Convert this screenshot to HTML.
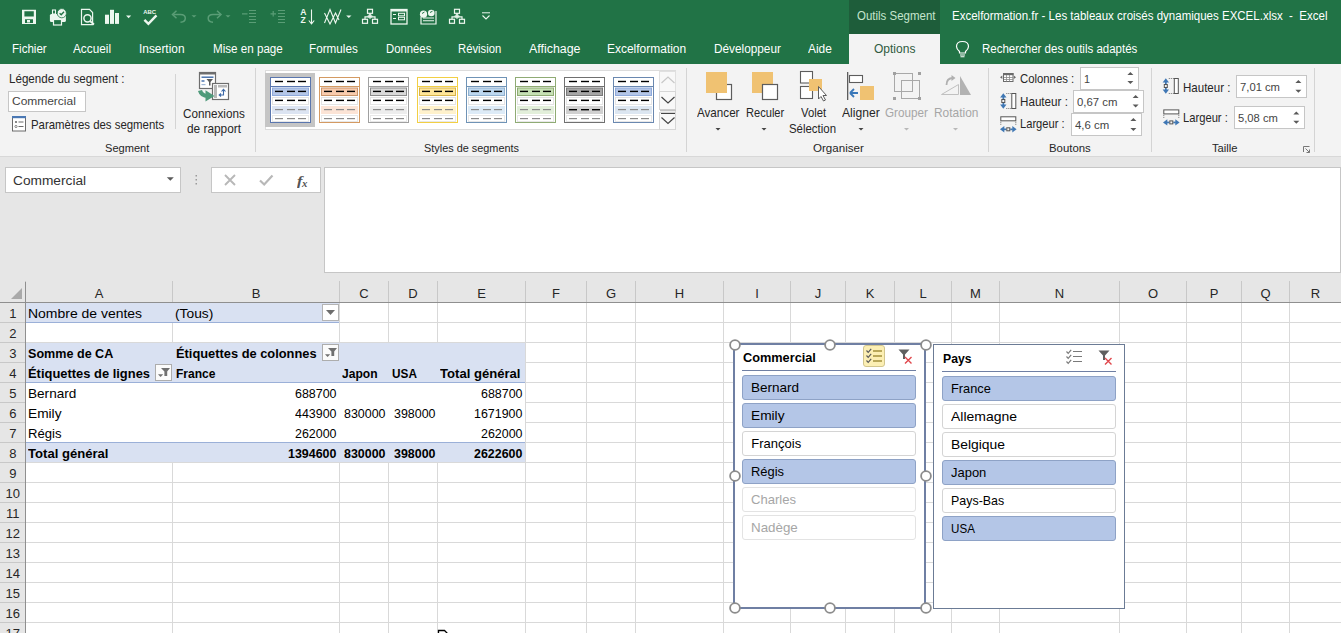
<!DOCTYPE html>
<html><head><meta charset="utf-8">
<style>
*{box-sizing:border-box}
html,body{margin:0;padding:0}
body{width:1341px;height:633px;overflow:hidden;position:relative;background:#fff;font-family:"Liberation Sans",sans-serif;color:#000}
.a{position:absolute}
.t{position:absolute;white-space:pre;transform-origin:0 0}
svg{position:absolute;overflow:visible}
</style></head><body>
<div class="a" style="left:0px;top:0px;width:1341px;height:64px;background:#217346;"></div>
<div class="a" style="left:849px;top:0px;width:91px;height:34px;background:#1e5d3a;"></div>
<div class="a" style="left:849px;top:34px;width:91px;height:30px;background:#f3f3f3;"></div>
<div class="t" style="left:856.50px;top:9.80px;font-size:12px;line-height:12px;color:#c5e5cd;transform:scaleX(0.9568);">Outils Segment</div>
<div class="t" style="left:952.00px;top:9.80px;font-size:12px;line-height:12px;color:#ffffff;transform:scaleX(0.9591);">Excelformation.fr - Les tableaux croisés dynamiques EXCEL.xlsx  -  Excel</div>
<div class="t" style="left:12.30px;top:42.58px;font-size:12.5px;line-height:12.5px;color:#ffffff;transform:scaleX(0.9249);">Fichier</div>
<div class="t" style="left:73.40px;top:42.58px;font-size:12.5px;line-height:12.5px;color:#ffffff;transform:scaleX(0.9430);">Accueil</div>
<div class="t" style="left:139.10px;top:42.58px;font-size:12.5px;line-height:12.5px;color:#ffffff;transform:scaleX(0.9488);">Insertion</div>
<div class="t" style="left:212.50px;top:42.58px;font-size:12.5px;line-height:12.5px;color:#ffffff;transform:scaleX(0.9299);">Mise en page</div>
<div class="t" style="left:309.00px;top:42.58px;font-size:12.5px;line-height:12.5px;color:#ffffff;transform:scaleX(0.9368);">Formules</div>
<div class="t" style="left:385.70px;top:42.58px;font-size:12.5px;line-height:12.5px;color:#ffffff;transform:scaleX(0.9052);">Données</div>
<div class="t" style="left:458.20px;top:42.58px;font-size:12.5px;line-height:12.5px;color:#ffffff;transform:scaleX(0.9012);">Révision</div>
<div class="t" style="left:528.90px;top:42.58px;font-size:12.5px;line-height:12.5px;color:#ffffff;transform:scaleX(0.9922);">Affichage</div>
<div class="t" style="left:607.40px;top:42.58px;font-size:12.5px;line-height:12.5px;color:#ffffff;transform:scaleX(0.9578);">Excelformation</div>
<div class="t" style="left:714.40px;top:42.58px;font-size:12.5px;line-height:12.5px;color:#ffffff;transform:scaleX(0.9437);">Développeur</div>
<div class="t" style="left:808.10px;top:42.58px;font-size:12.5px;line-height:12.5px;color:#ffffff;transform:scaleX(0.9548);">Aide</div>
<div class="t" style="left:873.60px;top:43.38px;font-size:12.5px;line-height:12.5px;color:#2f5b40;transform:scaleX(0.9607);">Options</div>
<div class="t" style="left:982.20px;top:42.67px;font-size:12.5px;line-height:12.5px;color:#ffffff;transform:scaleX(0.9197);">Rechercher des outils adaptés</div>
<div class="a" style="left:0px;top:64px;width:1341px;height:93px;background:#f3f3f3;"></div>
<div class="a" style="left:0px;top:156px;width:1341px;height:1px;background:#d8d8d8;"></div>
<div class="a" style="left:0px;top:157px;width:1341px;height:126px;background:#e6e6e6;"></div>
<div class="a" style="left:175px;top:74px;width:1px;height:55px;background:#d4d4d4;"></div>
<div class="a" style="left:255px;top:68px;width:1px;height:84px;background:#d4d4d4;"></div>
<div class="a" style="left:686px;top:68px;width:1px;height:84px;background:#d4d4d4;"></div>
<div class="a" style="left:988px;top:68px;width:1px;height:84px;background:#d4d4d4;"></div>
<div class="a" style="left:1151px;top:68px;width:1px;height:84px;background:#d4d4d4;"></div>
<div class="a" style="left:1314px;top:68px;width:1px;height:84px;background:#d4d4d4;"></div>
<div class="t" style="left:105.40px;top:143.08px;font-size:11.2px;line-height:11.2px;color:#262626;transform:scaleX(0.9893);">Segment</div>
<div class="t" style="left:812.50px;top:143.08px;font-size:11.2px;line-height:11.2px;color:#262626;transform:scaleX(1.0341);">Organiser</div>
<div class="t" style="left:1048.60px;top:142.68px;font-size:11.2px;line-height:11.2px;color:#262626;transform:scaleX(1.0180);">Boutons</div>
<div class="t" style="left:1212.00px;top:142.68px;font-size:11.2px;line-height:11.2px;color:#262626;transform:scaleX(1.0039);">Taille</div>
<div class="t" style="left:8.70px;top:73.23px;font-size:12.2px;line-height:12.2px;color:#262626;transform:scaleX(0.9522);">Légende du segment :</div>
<div class="a" style="left:8px;top:91px;width:78px;height:21px;background:#ffffff;border:1px solid #c6c6c6;"></div>
<div class="t" style="left:11.80px;top:95.82px;font-size:11.5px;line-height:11.5px;color:#444444;transform:scaleX(1.0400);">Commercial</div>
<div class="t" style="left:30.60px;top:118.93px;font-size:12.2px;line-height:12.2px;color:#262626;transform:scaleX(0.9363);">Paramètres des segments</div>
<div class="t" style="left:182.80px;top:107.83px;font-size:12.2px;line-height:12.2px;color:#262626;transform:scaleX(0.9600);">Connexions</div>
<div class="t" style="left:186.70px;top:122.83px;font-size:12.2px;line-height:12.2px;color:#262626;transform:scaleX(0.9719);">de rapport</div>
<div class="a" style="left:5px;top:167px;width:176px;height:26px;background:#ffffff;border:1px solid #c6c6c6;"></div>
<div class="t" style="left:12.50px;top:174.57px;font-size:12.5px;line-height:12.5px;color:#333333;transform:scaleX(1.0962);">Commercial</div>
<div class="a" style="left:211px;top:167px;width:110px;height:26px;background:#ffffff;border:1px solid #c6c6c6;"></div>
<div class="a" style="left:324px;top:167px;width:1017px;height:106px;background:#ffffff;border:1px solid #c6c6c6;"></div>
<div class="a" style="left:0px;top:283px;width:1341px;height:20px;background:#e6e6e6;"></div>
<div class="a" style="left:0px;top:302px;width:1341px;height:1px;background:#8f8f8f;"></div>
<div class="a" style="left:25px;top:281px;width:1px;height:21px;background:#c8c8c8;"></div>
<div class="a" style="left:172px;top:281px;width:1px;height:21px;background:#c8c8c8;"></div>
<div class="a" style="left:339px;top:281px;width:1px;height:21px;background:#c8c8c8;"></div>
<div class="a" style="left:388px;top:281px;width:1px;height:21px;background:#c8c8c8;"></div>
<div class="a" style="left:437px;top:281px;width:1px;height:21px;background:#c8c8c8;"></div>
<div class="a" style="left:525px;top:281px;width:1px;height:21px;background:#c8c8c8;"></div>
<div class="a" style="left:586px;top:281px;width:1px;height:21px;background:#c8c8c8;"></div>
<div class="a" style="left:635px;top:281px;width:1px;height:21px;background:#c8c8c8;"></div>
<div class="a" style="left:723px;top:281px;width:1px;height:21px;background:#c8c8c8;"></div>
<div class="a" style="left:790px;top:281px;width:1px;height:21px;background:#c8c8c8;"></div>
<div class="a" style="left:845px;top:281px;width:1px;height:21px;background:#c8c8c8;"></div>
<div class="a" style="left:894px;top:281px;width:1px;height:21px;background:#c8c8c8;"></div>
<div class="a" style="left:951px;top:281px;width:1px;height:21px;background:#c8c8c8;"></div>
<div class="a" style="left:999px;top:281px;width:1px;height:21px;background:#c8c8c8;"></div>
<div class="a" style="left:1119px;top:281px;width:1px;height:21px;background:#c8c8c8;"></div>
<div class="a" style="left:1186px;top:281px;width:1px;height:21px;background:#c8c8c8;"></div>
<div class="a" style="left:1241px;top:281px;width:1px;height:21px;background:#c8c8c8;"></div>
<div class="a" style="left:1289px;top:281px;width:1px;height:21px;background:#c8c8c8;"></div>
<div class="t" style="left:94.66px;top:286.95px;font-size:13px;line-height:13px;color:#262626;">A</div>
<div class="t" style="left:251.66px;top:286.95px;font-size:13px;line-height:13px;color:#262626;">B</div>
<div class="t" style="left:359.30px;top:286.95px;font-size:13px;line-height:13px;color:#262626;">C</div>
<div class="t" style="left:408.30px;top:286.95px;font-size:13px;line-height:13px;color:#262626;">D</div>
<div class="t" style="left:477.16px;top:286.95px;font-size:13px;line-height:13px;color:#262626;">E</div>
<div class="t" style="left:552.02px;top:286.95px;font-size:13px;line-height:13px;color:#262626;">F</div>
<div class="t" style="left:605.94px;top:286.95px;font-size:13px;line-height:13px;color:#262626;">G</div>
<div class="t" style="left:674.80px;top:286.95px;font-size:13px;line-height:13px;color:#262626;">H</div>
<div class="t" style="left:755.19px;top:286.95px;font-size:13px;line-height:13px;color:#262626;">I</div>
<div class="t" style="left:814.75px;top:286.95px;font-size:13px;line-height:13px;color:#262626;">J</div>
<div class="t" style="left:865.66px;top:286.95px;font-size:13px;line-height:13px;color:#262626;">K</div>
<div class="t" style="left:919.38px;top:286.95px;font-size:13px;line-height:13px;color:#262626;">L</div>
<div class="t" style="left:970.08px;top:286.95px;font-size:13px;line-height:13px;color:#262626;">M</div>
<div class="t" style="left:1054.80px;top:286.95px;font-size:13px;line-height:13px;color:#262626;">N</div>
<div class="t" style="left:1147.94px;top:286.95px;font-size:13px;line-height:13px;color:#262626;">O</div>
<div class="t" style="left:1209.66px;top:286.95px;font-size:13px;line-height:13px;color:#262626;">P</div>
<div class="t" style="left:1260.44px;top:286.95px;font-size:13px;line-height:13px;color:#262626;">Q</div>
<div class="t" style="left:1310.80px;top:286.95px;font-size:13px;line-height:13px;color:#262626;">R</div>
<div class="a" style="left:0px;top:303px;width:25px;height:330px;background:#e6e6e6;"></div>
<div class="a" style="left:25px;top:282px;width:1px;height:351px;background:#8f8f8f;"></div>
<div class="a" style="left:0px;top:322px;width:25px;height:1px;background:#c8c8c8;"></div>
<div class="t" style="left:9.18px;top:306.95px;font-size:13px;line-height:13px;color:#262626;">1</div>
<div class="a" style="left:0px;top:342px;width:25px;height:1px;background:#c8c8c8;"></div>
<div class="t" style="left:9.18px;top:326.95px;font-size:13px;line-height:13px;color:#262626;">2</div>
<div class="a" style="left:0px;top:362px;width:25px;height:1px;background:#c8c8c8;"></div>
<div class="t" style="left:9.18px;top:346.95px;font-size:13px;line-height:13px;color:#262626;">3</div>
<div class="a" style="left:0px;top:382px;width:25px;height:1px;background:#c8c8c8;"></div>
<div class="t" style="left:9.18px;top:366.95px;font-size:13px;line-height:13px;color:#262626;">4</div>
<div class="a" style="left:0px;top:402px;width:25px;height:1px;background:#c8c8c8;"></div>
<div class="t" style="left:9.18px;top:386.95px;font-size:13px;line-height:13px;color:#262626;">5</div>
<div class="a" style="left:0px;top:422px;width:25px;height:1px;background:#c8c8c8;"></div>
<div class="t" style="left:9.18px;top:406.95px;font-size:13px;line-height:13px;color:#262626;">6</div>
<div class="a" style="left:0px;top:442px;width:25px;height:1px;background:#c8c8c8;"></div>
<div class="t" style="left:9.18px;top:426.95px;font-size:13px;line-height:13px;color:#262626;">7</div>
<div class="a" style="left:0px;top:462px;width:25px;height:1px;background:#c8c8c8;"></div>
<div class="t" style="left:9.18px;top:446.95px;font-size:13px;line-height:13px;color:#262626;">8</div>
<div class="a" style="left:0px;top:482px;width:25px;height:1px;background:#c8c8c8;"></div>
<div class="t" style="left:9.18px;top:466.95px;font-size:13px;line-height:13px;color:#262626;">9</div>
<div class="a" style="left:0px;top:502px;width:25px;height:1px;background:#c8c8c8;"></div>
<div class="t" style="left:5.57px;top:486.95px;font-size:13px;line-height:13px;color:#262626;">10</div>
<div class="a" style="left:0px;top:522px;width:25px;height:1px;background:#c8c8c8;"></div>
<div class="t" style="left:6.05px;top:506.95px;font-size:13px;line-height:13px;color:#262626;">11</div>
<div class="a" style="left:0px;top:542px;width:25px;height:1px;background:#c8c8c8;"></div>
<div class="t" style="left:5.57px;top:526.95px;font-size:13px;line-height:13px;color:#262626;">12</div>
<div class="a" style="left:0px;top:562px;width:25px;height:1px;background:#c8c8c8;"></div>
<div class="t" style="left:5.57px;top:546.95px;font-size:13px;line-height:13px;color:#262626;">13</div>
<div class="a" style="left:0px;top:582px;width:25px;height:1px;background:#c8c8c8;"></div>
<div class="t" style="left:5.57px;top:566.95px;font-size:13px;line-height:13px;color:#262626;">14</div>
<div class="a" style="left:0px;top:602px;width:25px;height:1px;background:#c8c8c8;"></div>
<div class="t" style="left:5.57px;top:586.95px;font-size:13px;line-height:13px;color:#262626;">15</div>
<div class="a" style="left:0px;top:622px;width:25px;height:1px;background:#c8c8c8;"></div>
<div class="t" style="left:5.57px;top:606.95px;font-size:13px;line-height:13px;color:#262626;">16</div>
<div class="a" style="left:0px;top:642px;width:25px;height:1px;background:#c8c8c8;"></div>
<div class="t" style="left:5.57px;top:626.95px;font-size:13px;line-height:13px;color:#262626;">17</div>
<div class="a" style="left:26px;top:322px;width:1315px;height:1px;background:#d9d9d9;"></div>
<div class="a" style="left:26px;top:342px;width:1315px;height:1px;background:#d9d9d9;"></div>
<div class="a" style="left:26px;top:362px;width:1315px;height:1px;background:#d9d9d9;"></div>
<div class="a" style="left:26px;top:382px;width:1315px;height:1px;background:#d9d9d9;"></div>
<div class="a" style="left:26px;top:402px;width:1315px;height:1px;background:#d9d9d9;"></div>
<div class="a" style="left:26px;top:422px;width:1315px;height:1px;background:#d9d9d9;"></div>
<div class="a" style="left:26px;top:442px;width:1315px;height:1px;background:#d9d9d9;"></div>
<div class="a" style="left:26px;top:462px;width:1315px;height:1px;background:#d9d9d9;"></div>
<div class="a" style="left:26px;top:482px;width:1315px;height:1px;background:#d9d9d9;"></div>
<div class="a" style="left:26px;top:502px;width:1315px;height:1px;background:#d9d9d9;"></div>
<div class="a" style="left:26px;top:522px;width:1315px;height:1px;background:#d9d9d9;"></div>
<div class="a" style="left:26px;top:542px;width:1315px;height:1px;background:#d9d9d9;"></div>
<div class="a" style="left:26px;top:562px;width:1315px;height:1px;background:#d9d9d9;"></div>
<div class="a" style="left:26px;top:582px;width:1315px;height:1px;background:#d9d9d9;"></div>
<div class="a" style="left:26px;top:602px;width:1315px;height:1px;background:#d9d9d9;"></div>
<div class="a" style="left:26px;top:622px;width:1315px;height:1px;background:#d9d9d9;"></div>
<div class="a" style="left:172px;top:303px;width:1px;height:330px;background:#d9d9d9;"></div>
<div class="a" style="left:339px;top:303px;width:1px;height:330px;background:#d9d9d9;"></div>
<div class="a" style="left:388px;top:303px;width:1px;height:330px;background:#d9d9d9;"></div>
<div class="a" style="left:437px;top:303px;width:1px;height:330px;background:#d9d9d9;"></div>
<div class="a" style="left:525px;top:303px;width:1px;height:330px;background:#d9d9d9;"></div>
<div class="a" style="left:586px;top:303px;width:1px;height:330px;background:#d9d9d9;"></div>
<div class="a" style="left:635px;top:303px;width:1px;height:330px;background:#d9d9d9;"></div>
<div class="a" style="left:723px;top:303px;width:1px;height:330px;background:#d9d9d9;"></div>
<div class="a" style="left:790px;top:303px;width:1px;height:330px;background:#d9d9d9;"></div>
<div class="a" style="left:845px;top:303px;width:1px;height:330px;background:#d9d9d9;"></div>
<div class="a" style="left:894px;top:303px;width:1px;height:330px;background:#d9d9d9;"></div>
<div class="a" style="left:951px;top:303px;width:1px;height:330px;background:#d9d9d9;"></div>
<div class="a" style="left:999px;top:303px;width:1px;height:330px;background:#d9d9d9;"></div>
<div class="a" style="left:1119px;top:303px;width:1px;height:330px;background:#d9d9d9;"></div>
<div class="a" style="left:1186px;top:303px;width:1px;height:330px;background:#d9d9d9;"></div>
<div class="a" style="left:1241px;top:303px;width:1px;height:330px;background:#d9d9d9;"></div>
<div class="a" style="left:1289px;top:303px;width:1px;height:330px;background:#d9d9d9;"></div>
<div class="a" style="left:26px;top:303px;width:313px;height:19px;background:#d9e1f2;"></div>
<div class="a" style="left:26px;top:322px;width:313px;height:1px;background:#9bb0d8;"></div>
<div class="a" style="left:26px;top:343px;width:499px;height:39px;background:#d9e1f2;"></div>
<div class="a" style="left:26px;top:382px;width:499px;height:1px;background:#9bb0d8;"></div>
<div class="a" style="left:26px;top:383px;width:499px;height:59px;background:#ffffff;"></div>
<div class="a" style="left:26px;top:442px;width:499px;height:1px;background:#9bb0d8;"></div>
<div class="a" style="left:26px;top:443px;width:499px;height:19px;background:#d9e1f2;"></div>
<div class="a" style="left:322px;top:304px;width:17px;height:17px;background:#ffffff;border:1px solid #b4b4b4;"></div>
<svg style="left:326px;top:310px" width="9" height="5"><path d="M0,0 L9,0 L4.5,5 Z" fill="#6d6d6d"/></svg>
<div class="a" style="left:155px;top:364px;width:17px;height:17px;background:#fbfbfb;border:1px solid #adadad"></div>
<svg style="left:155px;top:364px" width="17" height="17"><path d="M6,4 L15,4 L12.2,7.5 L12.2,12 L9.4,12 L9.4,7.5 Z" fill="#707070"/><path d="M3,10.3 L8.2,10.3 L5.6,13 Z" fill="#707070"/></svg>
<div class="a" style="left:322px;top:344px;width:17px;height:17px;background:#fbfbfb;border:1px solid #adadad"></div>
<svg style="left:322px;top:344px" width="17" height="17"><path d="M6,4 L15,4 L12.2,7.5 L12.2,12 L9.4,12 L9.4,7.5 Z" fill="#707070"/><path d="M3,10.3 L8.2,10.3 L5.6,13 Z" fill="#707070"/></svg>
<div class="t" style="left:27.80px;top:306.52px;font-size:13.5px;line-height:13.5px;color:#000000;transform:scaleX(1.0343);">Nombre de ventes</div>
<div class="t" style="left:175.20px;top:306.52px;font-size:13.5px;line-height:13.5px;color:#000000;transform:scaleX(1.0209);">(Tous)</div>
<div class="t" style="left:27.80px;top:346.75px;font-size:13px;line-height:13px;color:#000000;font-weight:700;transform:scaleX(0.9678);">Somme de CA</div>
<div class="t" style="left:175.75px;top:346.85px;font-size:13px;line-height:13px;color:#000000;font-weight:700;transform:scaleX(0.9880);">Étiquettes de colonnes</div>
<div class="t" style="left:27.80px;top:366.55px;font-size:13px;line-height:13px;color:#000000;font-weight:700;transform:scaleX(0.9934);">Étiquettes de lignes</div>
<div class="t" style="left:175.75px;top:366.95px;font-size:13px;line-height:13px;color:#000000;font-weight:700;transform:scaleX(0.9263);">France</div>
<div class="t" style="left:342.30px;top:366.95px;font-size:13px;line-height:13px;color:#000000;font-weight:700;transform:scaleX(0.9270);">Japon</div>
<div class="t" style="left:391.90px;top:366.95px;font-size:13px;line-height:13px;color:#000000;font-weight:700;transform:scaleX(0.9070);">USA</div>
<div class="t" style="left:440.20px;top:366.95px;font-size:13px;line-height:13px;color:#000000;font-weight:700;transform:scaleX(1.0068);">Total général</div>
<div class="t" style="left:27.80px;top:386.52px;font-size:13.5px;line-height:13.5px;color:#000000;transform:scaleX(1.0056);">Bernard</div>
<div class="t" style="left:27.80px;top:406.52px;font-size:13.5px;line-height:13.5px;color:#000000;transform:scaleX(1.0152);">Emily</div>
<div class="t" style="left:27.80px;top:426.52px;font-size:13.5px;line-height:13.5px;color:#000000;transform:scaleX(0.9706);">Régis</div>
<div class="t" style="left:27.80px;top:446.95px;font-size:13px;line-height:13px;color:#000000;font-weight:700;transform:scaleX(1.0068);">Total général</div>
<div class="t" style="left:295.10px;top:386.95px;font-size:13px;line-height:13px;color:#000000;transform:scaleX(0.9564);">688700</div>
<div class="t" style="left:481.20px;top:386.95px;font-size:13px;line-height:13px;color:#000000;transform:scaleX(0.9564);">688700</div>
<div class="t" style="left:295.10px;top:406.95px;font-size:13px;line-height:13px;color:#000000;transform:scaleX(0.9564);">443900</div>
<div class="t" style="left:344.30px;top:406.95px;font-size:13px;line-height:13px;color:#000000;transform:scaleX(0.9564);">830000</div>
<div class="t" style="left:393.50px;top:406.95px;font-size:13px;line-height:13px;color:#000000;transform:scaleX(0.9564);">398000</div>
<div class="t" style="left:474.28px;top:406.95px;font-size:13px;line-height:13px;color:#000000;transform:scaleX(0.9564);">1671900</div>
<div class="t" style="left:295.10px;top:426.95px;font-size:13px;line-height:13px;color:#000000;transform:scaleX(0.9564);">262000</div>
<div class="t" style="left:481.20px;top:426.95px;font-size:13px;line-height:13px;color:#000000;transform:scaleX(0.9564);">262000</div>
<div class="t" style="left:288.18px;top:446.95px;font-size:13px;line-height:13px;color:#000000;font-weight:700;transform:scaleX(0.9564);">1394600</div>
<div class="t" style="left:344.30px;top:446.95px;font-size:13px;line-height:13px;color:#000000;font-weight:700;transform:scaleX(0.9564);">830000</div>
<div class="t" style="left:393.50px;top:446.95px;font-size:13px;line-height:13px;color:#000000;font-weight:700;transform:scaleX(0.9564);">398000</div>
<div class="t" style="left:474.28px;top:446.95px;font-size:13px;line-height:13px;color:#000000;font-weight:700;transform:scaleX(0.9564);">2622600</div>
<div class="a" style="left:733px;top:343px;width:193px;height:266px;background:#ffffff;border:2px solid #6f7fa3;"></div>
<div class="t" style="left:742.80px;top:350.65px;font-size:13px;line-height:13px;color:#000;font-weight:700;transform:scaleX(0.9796);">Commercial</div>
<div class="a" style="left:742px;top:370px;width:174px;height:1px;background:#6f7fa3;"></div>
<div class="a" style="left:742px;top:375px;width:174px;height:25px;background:#b4c6e7;border:1px solid #8ea2c6;border-radius:3px"></div>
<div class="t" style="left:751.30px;top:380.95px;font-size:13px;line-height:13px;color:#000000;transform:scaleX(1.0400);">Bernard</div>
<div class="a" style="left:742px;top:403px;width:174px;height:25px;background:#b4c6e7;border:1px solid #8ea2c6;border-radius:3px"></div>
<div class="t" style="left:751.30px;top:408.95px;font-size:13px;line-height:13px;color:#000000;transform:scaleX(1.0541);">Emily</div>
<div class="a" style="left:742px;top:431px;width:174px;height:25px;background:#ffffff;border:1px solid #d4d4d4;border-radius:3px"></div>
<div class="t" style="left:751.30px;top:436.95px;font-size:13px;line-height:13px;color:#000000;">François</div>
<div class="a" style="left:742px;top:459px;width:174px;height:25px;background:#b4c6e7;border:1px solid #8ea2c6;border-radius:3px"></div>
<div class="t" style="left:751.30px;top:464.95px;font-size:13px;line-height:13px;color:#000000;transform:scaleX(0.9925);">Régis</div>
<div class="a" style="left:742px;top:487px;width:174px;height:25px;background:#ffffff;border:1px solid #e3e3e3;border-radius:3px"></div>
<div class="t" style="left:751.30px;top:492.95px;font-size:13px;line-height:13px;color:#a6a6a6;transform:scaleX(1.0045);">Charles</div>
<div class="a" style="left:742px;top:515px;width:174px;height:25px;background:#ffffff;border:1px solid #e3e3e3;border-radius:3px"></div>
<div class="t" style="left:751.30px;top:520.95px;font-size:13px;line-height:13px;color:#a6a6a6;transform:scaleX(1.0275);">Nadège</div>
<div class="a" style="left:933px;top:344px;width:192px;height:265px;background:#ffffff;border:1px solid #6b7b95;"></div>
<div class="t" style="left:942.50px;top:351.85px;font-size:13px;line-height:13px;color:#000;font-weight:700;transform:scaleX(0.9383);">Pays</div>
<div class="a" style="left:942px;top:371px;width:174px;height:1px;background:#6f7fa3;"></div>
<div class="a" style="left:942px;top:376px;width:174px;height:25px;background:#b4c6e7;border:1px solid #8ea2c6;border-radius:3px"></div>
<div class="t" style="left:951.30px;top:381.95px;font-size:13px;line-height:13px;color:#000000;transform:scaleX(0.9835);">France</div>
<div class="a" style="left:942px;top:404px;width:174px;height:25px;background:#ffffff;border:1px solid #d4d4d4;border-radius:3px"></div>
<div class="t" style="left:951.30px;top:409.95px;font-size:13px;line-height:13px;color:#000000;transform:scaleX(1.0743);">Allemagne</div>
<div class="a" style="left:942px;top:432px;width:174px;height:25px;background:#ffffff;border:1px solid #d4d4d4;border-radius:3px"></div>
<div class="t" style="left:951.30px;top:437.95px;font-size:13px;line-height:13px;color:#000000;transform:scaleX(1.0670);">Belgique</div>
<div class="a" style="left:942px;top:460px;width:174px;height:25px;background:#b4c6e7;border:1px solid #8ea2c6;border-radius:3px"></div>
<div class="t" style="left:951.30px;top:465.95px;font-size:13px;line-height:13px;color:#000000;transform:scaleX(0.9966);">Japon</div>
<div class="a" style="left:942px;top:488px;width:174px;height:25px;background:#ffffff;border:1px solid #d4d4d4;border-radius:3px"></div>
<div class="t" style="left:951.30px;top:493.95px;font-size:13px;line-height:13px;color:#000000;transform:scaleX(0.9561);">Pays-Bas</div>
<div class="a" style="left:942px;top:516px;width:174px;height:25px;background:#b4c6e7;border:1px solid #8ea2c6;border-radius:3px"></div>
<div class="t" style="left:951.30px;top:521.95px;font-size:13px;line-height:13px;color:#000000;transform:scaleX(0.8940);">USA</div>
<svg style="left:728.5px;top:338.5px" width="12" height="12"><circle cx="6" cy="6" r="4.9" fill="#ffffff" stroke="#8c8c8c" stroke-width="1.8"/></svg>
<svg style="left:728.5px;top:470.2px" width="12" height="12"><circle cx="6" cy="6" r="4.9" fill="#ffffff" stroke="#8c8c8c" stroke-width="1.8"/></svg>
<svg style="left:728.5px;top:602.0px" width="12" height="12"><circle cx="6" cy="6" r="4.9" fill="#ffffff" stroke="#8c8c8c" stroke-width="1.8"/></svg>
<svg style="left:823.5px;top:338.5px" width="12" height="12"><circle cx="6" cy="6" r="4.9" fill="#ffffff" stroke="#8c8c8c" stroke-width="1.8"/></svg>
<svg style="left:823.5px;top:602.0px" width="12" height="12"><circle cx="6" cy="6" r="4.9" fill="#ffffff" stroke="#8c8c8c" stroke-width="1.8"/></svg>
<svg style="left:919.5px;top:338.5px" width="12" height="12"><circle cx="6" cy="6" r="4.9" fill="#ffffff" stroke="#8c8c8c" stroke-width="1.8"/></svg>
<svg style="left:919.5px;top:470.2px" width="12" height="12"><circle cx="6" cy="6" r="4.9" fill="#ffffff" stroke="#8c8c8c" stroke-width="1.8"/></svg>
<svg style="left:919.5px;top:602.0px" width="12" height="12"><circle cx="6" cy="6" r="4.9" fill="#ffffff" stroke="#8c8c8c" stroke-width="1.8"/></svg>
<div class="a" style="left:863px;top:345px;width:22px;height:22px;background:#fcefb4;border:1px solid #d2c68e;border-radius:3px"></div>
<svg style="left:863px;top:345px" width="22" height="22"><path d="M3.5,5.5 L5.2,7.3 L8.2,3.8" fill="none" stroke="#5a5a5a" stroke-width="1.2"/><rect x="10" y="5" width="9" height="2" fill="#b9a85a"/><path d="M3.5,10.5 L5.2,12.3 L8.2,8.8" fill="none" stroke="#5a5a5a" stroke-width="1.2"/><rect x="10" y="10" width="9" height="2" fill="#b9a85a"/><path d="M3.5,15.5 L5.2,17.3 L8.2,13.8" fill="none" stroke="#5a5a5a" stroke-width="1.2"/><rect x="10" y="15" width="9" height="2" fill="#b9a85a"/></svg>
<svg style="left:898px;top:349px" width="16" height="16"><path d="M0.5,0.5 L11.5,0.5 L7,5.5 L7,10 L5,10 L5,5.5 Z" fill="#5f5f5f"/><path d="M7,8 L13.5,14.5 M13.5,8 L7,14.5" stroke="#e0474c" stroke-width="1.4"/></svg>
<svg style="left:1063.3px;top:346px" width="22" height="22"><path d="M3.5,5.5 L5.2,7.3 L8.2,3.8" fill="none" stroke="#7a7a7a" stroke-width="1.2"/><rect x="10" y="5" width="9" height="1" fill="#7a7a7a"/><path d="M3.5,10.5 L5.2,12.3 L8.2,8.8" fill="none" stroke="#7a7a7a" stroke-width="1.2"/><rect x="10" y="10" width="9" height="1" fill="#7a7a7a"/><path d="M3.5,15.5 L5.2,17.3 L8.2,13.8" fill="none" stroke="#7a7a7a" stroke-width="1.2"/><rect x="10" y="15" width="9" height="1" fill="#7a7a7a"/></svg>
<svg style="left:1097.5px;top:350px" width="16" height="16"><path d="M0.5,0.5 L11.5,0.5 L7,5.5 L7,10 L5,10 L5,5.5 Z" fill="#5f5f5f"/><path d="M7,8 L13.5,14.5 M13.5,8 L7,14.5" stroke="#e0474c" stroke-width="1.4"/></svg>
<div class="a" style="left:265px;top:70px;width:411px;height:60px;background:#ffffff;border:1px solid #dcdcdc;"></div>
<div class="a" style="left:265px;top:73px;width:50px;height:54px;background:#c5c5c5;"></div>
<svg style="left:270px;top:77px" width="41" height="46"><rect x="0.5" y="0.5" width="40" height="45" fill="#ffffff" stroke="#5a76ae"/><rect x="0.5" y="9" width="40" height="1" fill="#5a76ae"/><rect x="2.5" y="11" width="36" height="7.5" fill="#b4c6e7" stroke="#8ea9db"/><rect x="2.5" y="20.5" width="36" height="7" fill="#ffffff" stroke="#e4e4e4"/><rect x="2.5" y="29.5" width="36" height="7" fill="#dce4f2" stroke="#dce4f2"/><rect x="2.5" y="38.5" width="36" height="6" fill="#ffffff" stroke="#e8e8e8"/><rect x="5" y="3.8" width="8" height="1.4" fill="#000"/><rect x="17" y="3.8" width="8" height="1.4" fill="#000"/><rect x="28" y="3.8" width="8" height="1.4" fill="#000"/><rect x="5" y="13.7" width="8" height="1.4" fill="#000"/><rect x="17" y="13.7" width="8" height="1.4" fill="#000"/><rect x="28" y="13.7" width="8" height="1.4" fill="#000"/><rect x="5" y="22.7" width="8" height="1.4" fill="#000"/><rect x="17" y="22.7" width="8" height="1.4" fill="#000"/><rect x="28" y="22.7" width="8" height="1.4" fill="#000"/><rect x="5" y="32" width="8" height="1.2" fill="#8a8a8a"/><rect x="17" y="32" width="8" height="1.2" fill="#8a8a8a"/><rect x="28" y="32" width="8" height="1.2" fill="#8a8a8a"/><rect x="5" y="41" width="8" height="1.2" fill="#8a8a8a"/><rect x="17" y="41" width="8" height="1.2" fill="#8a8a8a"/><rect x="28" y="41" width="8" height="1.2" fill="#8a8a8a"/></svg>
<svg style="left:319px;top:77px" width="41" height="46"><rect x="0.5" y="0.5" width="40" height="45" fill="#ffffff" stroke="#d49a62"/><rect x="0.5" y="9" width="40" height="1" fill="#d49a62"/><rect x="2.5" y="11" width="36" height="7.5" fill="#f8cbad" stroke="#c9946a"/><rect x="2.5" y="20.5" width="36" height="7" fill="#ffffff" stroke="#e4e4e4"/><rect x="2.5" y="29.5" width="36" height="7" fill="#fce4d6" stroke="#fce4d6"/><rect x="2.5" y="38.5" width="36" height="6" fill="#ffffff" stroke="#e8e8e8"/><rect x="5" y="3.8" width="8" height="1.4" fill="#000"/><rect x="17" y="3.8" width="8" height="1.4" fill="#000"/><rect x="28" y="3.8" width="8" height="1.4" fill="#000"/><rect x="5" y="13.7" width="8" height="1.4" fill="#000"/><rect x="17" y="13.7" width="8" height="1.4" fill="#000"/><rect x="28" y="13.7" width="8" height="1.4" fill="#000"/><rect x="5" y="22.7" width="8" height="1.4" fill="#000"/><rect x="17" y="22.7" width="8" height="1.4" fill="#000"/><rect x="28" y="22.7" width="8" height="1.4" fill="#000"/><rect x="5" y="32" width="8" height="1.2" fill="#8a8a8a"/><rect x="17" y="32" width="8" height="1.2" fill="#8a8a8a"/><rect x="28" y="32" width="8" height="1.2" fill="#8a8a8a"/><rect x="5" y="41" width="8" height="1.2" fill="#8a8a8a"/><rect x="17" y="41" width="8" height="1.2" fill="#8a8a8a"/><rect x="28" y="41" width="8" height="1.2" fill="#8a8a8a"/></svg>
<svg style="left:368px;top:77px" width="41" height="46"><rect x="0.5" y="0.5" width="40" height="45" fill="#ffffff" stroke="#a0a0a0"/><rect x="0.5" y="9" width="40" height="1" fill="#a0a0a0"/><rect x="2.5" y="11" width="36" height="7.5" fill="#d9d9d9" stroke="#8c8c8c"/><rect x="2.5" y="20.5" width="36" height="7" fill="#ffffff" stroke="#e4e4e4"/><rect x="2.5" y="29.5" width="36" height="7" fill="#ededed" stroke="#ededed"/><rect x="2.5" y="38.5" width="36" height="6" fill="#ffffff" stroke="#e8e8e8"/><rect x="5" y="3.8" width="8" height="1.4" fill="#000"/><rect x="17" y="3.8" width="8" height="1.4" fill="#000"/><rect x="28" y="3.8" width="8" height="1.4" fill="#000"/><rect x="5" y="13.7" width="8" height="1.4" fill="#000"/><rect x="17" y="13.7" width="8" height="1.4" fill="#000"/><rect x="28" y="13.7" width="8" height="1.4" fill="#000"/><rect x="5" y="22.7" width="8" height="1.4" fill="#000"/><rect x="17" y="22.7" width="8" height="1.4" fill="#000"/><rect x="28" y="22.7" width="8" height="1.4" fill="#000"/><rect x="5" y="32" width="8" height="1.2" fill="#8a8a8a"/><rect x="17" y="32" width="8" height="1.2" fill="#8a8a8a"/><rect x="28" y="32" width="8" height="1.2" fill="#8a8a8a"/><rect x="5" y="41" width="8" height="1.2" fill="#8a8a8a"/><rect x="17" y="41" width="8" height="1.2" fill="#8a8a8a"/><rect x="28" y="41" width="8" height="1.2" fill="#8a8a8a"/></svg>
<svg style="left:417px;top:77px" width="41" height="46"><rect x="0.5" y="0.5" width="40" height="45" fill="#ffffff" stroke="#f2cf44"/><rect x="0.5" y="9" width="40" height="1" fill="#f2cf44"/><rect x="2.5" y="11" width="36" height="7.5" fill="#ffe699" stroke="#d6b24a"/><rect x="2.5" y="20.5" width="36" height="7" fill="#ffffff" stroke="#e4e4e4"/><rect x="2.5" y="29.5" width="36" height="7" fill="#fff2cc" stroke="#fff2cc"/><rect x="2.5" y="38.5" width="36" height="6" fill="#ffffff" stroke="#e8e8e8"/><rect x="5" y="3.8" width="8" height="1.4" fill="#000"/><rect x="17" y="3.8" width="8" height="1.4" fill="#000"/><rect x="28" y="3.8" width="8" height="1.4" fill="#000"/><rect x="5" y="13.7" width="8" height="1.4" fill="#000"/><rect x="17" y="13.7" width="8" height="1.4" fill="#000"/><rect x="28" y="13.7" width="8" height="1.4" fill="#000"/><rect x="5" y="22.7" width="8" height="1.4" fill="#000"/><rect x="17" y="22.7" width="8" height="1.4" fill="#000"/><rect x="28" y="22.7" width="8" height="1.4" fill="#000"/><rect x="5" y="32" width="8" height="1.2" fill="#8a8a8a"/><rect x="17" y="32" width="8" height="1.2" fill="#8a8a8a"/><rect x="28" y="32" width="8" height="1.2" fill="#8a8a8a"/><rect x="5" y="41" width="8" height="1.2" fill="#8a8a8a"/><rect x="17" y="41" width="8" height="1.2" fill="#8a8a8a"/><rect x="28" y="41" width="8" height="1.2" fill="#8a8a8a"/></svg>
<svg style="left:466px;top:77px" width="41" height="46"><rect x="0.5" y="0.5" width="40" height="45" fill="#ffffff" stroke="#6f93b6"/><rect x="0.5" y="9" width="40" height="1" fill="#6f93b6"/><rect x="2.5" y="11" width="36" height="7.5" fill="#bdd7ee" stroke="#8fb0cf"/><rect x="2.5" y="20.5" width="36" height="7" fill="#ffffff" stroke="#e4e4e4"/><rect x="2.5" y="29.5" width="36" height="7" fill="#ddebf7" stroke="#ddebf7"/><rect x="2.5" y="38.5" width="36" height="6" fill="#ffffff" stroke="#e8e8e8"/><rect x="5" y="3.8" width="8" height="1.4" fill="#000"/><rect x="17" y="3.8" width="8" height="1.4" fill="#000"/><rect x="28" y="3.8" width="8" height="1.4" fill="#000"/><rect x="5" y="13.7" width="8" height="1.4" fill="#000"/><rect x="17" y="13.7" width="8" height="1.4" fill="#000"/><rect x="28" y="13.7" width="8" height="1.4" fill="#000"/><rect x="5" y="22.7" width="8" height="1.4" fill="#000"/><rect x="17" y="22.7" width="8" height="1.4" fill="#000"/><rect x="28" y="22.7" width="8" height="1.4" fill="#000"/><rect x="5" y="32" width="8" height="1.2" fill="#8a8a8a"/><rect x="17" y="32" width="8" height="1.2" fill="#8a8a8a"/><rect x="28" y="32" width="8" height="1.2" fill="#8a8a8a"/><rect x="5" y="41" width="8" height="1.2" fill="#8a8a8a"/><rect x="17" y="41" width="8" height="1.2" fill="#8a8a8a"/><rect x="28" y="41" width="8" height="1.2" fill="#8a8a8a"/></svg>
<svg style="left:515px;top:77px" width="41" height="46"><rect x="0.5" y="0.5" width="40" height="45" fill="#ffffff" stroke="#8fab74"/><rect x="0.5" y="9" width="40" height="1" fill="#8fab74"/><rect x="2.5" y="11" width="36" height="7.5" fill="#c6e0b4" stroke="#8fab74"/><rect x="2.5" y="20.5" width="36" height="7" fill="#ffffff" stroke="#e4e4e4"/><rect x="2.5" y="29.5" width="36" height="7" fill="#e2efda" stroke="#e2efda"/><rect x="2.5" y="38.5" width="36" height="6" fill="#ffffff" stroke="#e8e8e8"/><rect x="5" y="3.8" width="8" height="1.4" fill="#000"/><rect x="17" y="3.8" width="8" height="1.4" fill="#000"/><rect x="28" y="3.8" width="8" height="1.4" fill="#000"/><rect x="5" y="13.7" width="8" height="1.4" fill="#000"/><rect x="17" y="13.7" width="8" height="1.4" fill="#000"/><rect x="28" y="13.7" width="8" height="1.4" fill="#000"/><rect x="5" y="22.7" width="8" height="1.4" fill="#000"/><rect x="17" y="22.7" width="8" height="1.4" fill="#000"/><rect x="28" y="22.7" width="8" height="1.4" fill="#000"/><rect x="5" y="32" width="8" height="1.2" fill="#8a8a8a"/><rect x="17" y="32" width="8" height="1.2" fill="#8a8a8a"/><rect x="28" y="32" width="8" height="1.2" fill="#8a8a8a"/><rect x="5" y="41" width="8" height="1.2" fill="#8a8a8a"/><rect x="17" y="41" width="8" height="1.2" fill="#8a8a8a"/><rect x="28" y="41" width="8" height="1.2" fill="#8a8a8a"/></svg>
<svg style="left:564px;top:77px" width="41" height="46"><rect x="0.5" y="0.5" width="40" height="45" fill="#ffffff" stroke="#707070"/><rect x="0.5" y="9" width="40" height="1" fill="#707070"/><rect x="2.5" y="11" width="36" height="7.5" fill="#a6a6a6" stroke="#7a7a7a"/><rect x="2.5" y="20.5" width="36" height="7" fill="#ffffff" stroke="#e4e4e4"/><rect x="2.5" y="29.5" width="36" height="7" fill="#d0d0d0" stroke="#d0d0d0"/><rect x="2.5" y="38.5" width="36" height="6" fill="#ffffff" stroke="#e8e8e8"/><rect x="5" y="3.8" width="8" height="1.4" fill="#000"/><rect x="17" y="3.8" width="8" height="1.4" fill="#000"/><rect x="28" y="3.8" width="8" height="1.4" fill="#000"/><rect x="5" y="13.7" width="8" height="1.4" fill="#000"/><rect x="17" y="13.7" width="8" height="1.4" fill="#000"/><rect x="28" y="13.7" width="8" height="1.4" fill="#000"/><rect x="5" y="22.7" width="8" height="1.4" fill="#000"/><rect x="17" y="22.7" width="8" height="1.4" fill="#000"/><rect x="28" y="22.7" width="8" height="1.4" fill="#000"/><rect x="5" y="32" width="8" height="1.4" fill="#000"/><rect x="17" y="32" width="8" height="1.4" fill="#000"/><rect x="28" y="32" width="8" height="1.4" fill="#000"/><rect x="5" y="41" width="8" height="1.2" fill="#8a8a8a"/><rect x="17" y="41" width="8" height="1.2" fill="#8a8a8a"/><rect x="28" y="41" width="8" height="1.2" fill="#8a8a8a"/></svg>
<svg style="left:613px;top:77px" width="41" height="46"><rect x="0.5" y="0.5" width="40" height="45" fill="#ffffff" stroke="#6a88b0"/><rect x="0.5" y="9" width="40" height="1" fill="#6a88b0"/><rect x="2.5" y="11" width="36" height="7.5" fill="#b4c6e7" stroke="#8ea9db"/><rect x="2.5" y="20.5" width="36" height="7" fill="#ffffff" stroke="#e4e4e4"/><rect x="2.5" y="29.5" width="36" height="7" fill="#dce6f1" stroke="#dce6f1"/><rect x="2.5" y="38.5" width="36" height="6" fill="#ffffff" stroke="#e8e8e8"/><rect x="5" y="3.8" width="8" height="1.4" fill="#000"/><rect x="17" y="3.8" width="8" height="1.4" fill="#000"/><rect x="28" y="3.8" width="8" height="1.4" fill="#000"/><rect x="5" y="13.7" width="8" height="1.4" fill="#000"/><rect x="17" y="13.7" width="8" height="1.4" fill="#000"/><rect x="28" y="13.7" width="8" height="1.4" fill="#000"/><rect x="5" y="22.7" width="8" height="1.4" fill="#000"/><rect x="17" y="22.7" width="8" height="1.4" fill="#000"/><rect x="28" y="22.7" width="8" height="1.4" fill="#000"/><rect x="5" y="32" width="8" height="1.2" fill="#8a8a8a"/><rect x="17" y="32" width="8" height="1.2" fill="#8a8a8a"/><rect x="28" y="32" width="8" height="1.2" fill="#8a8a8a"/><rect x="5" y="41" width="8" height="1.2" fill="#8a8a8a"/><rect x="17" y="41" width="8" height="1.2" fill="#8a8a8a"/><rect x="28" y="41" width="8" height="1.2" fill="#8a8a8a"/></svg>
<div class="a" style="left:659px;top:71px;width:17px;height:21px;background:#f8f8f8;border:1px solid #e0e0e0"></div>
<div class="a" style="left:659px;top:91px;width:17px;height:19px;background:#f8f8f8;border:1px solid #d6d6d6"></div>
<div class="a" style="left:659px;top:112px;width:17px;height:18px;background:#f8f8f8;border:1px solid #d6d6d6"></div>
<svg style="left:660px;top:71px" width="16" height="60"><path d="M1.5,12 L8,6 L14.5,12" fill="none" stroke="#c8c8c8" stroke-width="1.2"/><path d="M1.5,26 L8,32 L14.5,26" fill="none" stroke="#444" stroke-width="1.2"/><rect x="0" y="38.5" width="16" height="1.8" fill="#c4c4c4"/><rect x="1" y="42" width="14" height="1" fill="#444"/><path d="M1.5,46.5 L8,52.5 L14.5,46.5" fill="none" stroke="#444" stroke-width="1.2"/></svg>
<div class="t" style="left:423.50px;top:142.98px;font-size:11.2px;line-height:11.2px;color:#262626;transform:scaleX(0.9730);">Styles de segments</div>
<svg style="left:0;top:0" width="1341" height="160"><rect x="716.5" y="84.5" width="15" height="15" fill="#fff" stroke="#5d5d5d" stroke-width="1.2"/><rect x="706" y="72" width="21" height="21" fill="#f0c272"/><rect x="752" y="72" width="21" height="21" fill="#f0c272"/><rect x="762.5" y="84.5" width="15" height="15" fill="#fff" stroke="#5d5d5d" stroke-width="1.2"/><rect x="800.5" y="71.5" width="12" height="11.5" fill="#fff" stroke="#5d5d5d" stroke-width="1.1"/><rect x="800.5" y="86.5" width="12" height="12" fill="#fff" stroke="#5d5d5d" stroke-width="1.1"/><rect x="809" y="79" width="13" height="12" fill="#f0c272"/><path d="M818.5,86.5 L818.5,99 L821,96.5 L823.5,101 L825.5,100 L823,95.5 L826.5,95.5 Z" fill="#fff" stroke="#5d5d5d" stroke-width="1"/><rect x="847" y="72" width="1.3" height="28" fill="#5d5d5d"/><rect x="849.5" y="75.5" width="13" height="7" fill="#fff" stroke="#5d5d5d" stroke-width="1.1"/><rect x="860" y="86" width="14" height="14" fill="#f0c272"/><path d="M850,93 L854,89 M850,93 L854,97 M850.5,93 L858,93" fill="none" stroke="#3a78b9" stroke-width="1.8"/><rect x="894.5" y="73.5" width="18" height="18" fill="none" stroke="#a8a8a8" stroke-width="1"/><rect x="901.5" y="80.5" width="18" height="18" fill="none" stroke="#a8a8a8" stroke-width="1"/><rect x="893" y="72" width="3" height="3" fill="#a0a0a0"/><rect x="918" y="72" width="3" height="3" fill="#a0a0a0"/><rect x="893" y="97" width="3" height="3" fill="#a0a0a0"/><rect x="918" y="97" width="3" height="3" fill="#a0a0a0"/><path d="M960,76 L971,95 L960,95 Z" fill="#b2b2b2"/><path d="M941.5,94.5 L958.5,84.5 L958.5,94.5 Z" fill="none" stroke="#c0c0c0" stroke-width="1"/><path d="M946.5,85 Q946.5,78 953,78" fill="none" stroke="#b0b0b0" stroke-width="1.8"/><path d="M951.5,75 L955.5,78 L951.5,81 Z" fill="#b0b0b0"/><path d="M715.5,128 L720.5,128 L718,130.5 Z" fill="#444"/><path d="M761.5,128 L766.5,128 L764,130.5 Z" fill="#444"/><path d="M858.5,128 L863.5,128 L861,130.5 Z" fill="#444"/><path d="M904,128 L909,128 L906.5,130.5 Z" fill="#b8b8b8"/><path d="M953,128 L958,128 L955.5,130.5 Z" fill="#b8b8b8"/></svg>
<div class="t" style="left:697.20px;top:107.23px;font-size:12.2px;line-height:12.2px;color:#262626;transform:scaleX(0.9551);">Avancer</div>
<div class="t" style="left:745.60px;top:107.23px;font-size:12.2px;line-height:12.2px;color:#262626;transform:scaleX(0.9095);">Reculer</div>
<div class="t" style="left:800.50px;top:107.23px;font-size:12.2px;line-height:12.2px;color:#262626;transform:scaleX(0.9259);">Volet</div>
<div class="t" style="left:789.30px;top:122.63px;font-size:12.2px;line-height:12.2px;color:#262626;transform:scaleX(0.9374);">Sélection</div>
<div class="t" style="left:842.30px;top:107.23px;font-size:12.2px;line-height:12.2px;color:#262626;transform:scaleX(0.9937);">Aligner</div>
<div class="t" style="left:885.30px;top:107.23px;font-size:12.2px;line-height:12.2px;color:#a6a6a6;transform:scaleX(0.9593);">Grouper</div>
<div class="t" style="left:933.50px;top:107.23px;font-size:12.2px;line-height:12.2px;color:#a6a6a6;transform:scaleX(0.9778);">Rotation</div>
<div class="a" style="left:1080px;top:67px;width:59px;height:23px;background:#ffffff;border:1px solid #c6c6c6;"></div>
<div class="t" style="left:1083.50px;top:74.02px;font-size:11.5px;line-height:11.5px;color:#444444;transform:scaleX(0.9366);">1</div>
<svg style="left:0;top:0" width="1341" height="160"><path d="M1127.4,75.1 L1133.4,75.1 L1130.4,72.1 Z" fill="#5a5a5a"/><path d="M1127.4,81.1 L1133.4,81.1 L1130.4,84.1 Z" fill="#5a5a5a"/></svg>
<div class="a" style="left:1073px;top:90px;width:71px;height:23px;background:#ffffff;border:1px solid #c6c6c6;"></div>
<div class="t" style="left:1076.50px;top:97.02px;font-size:11.5px;line-height:11.5px;color:#444444;transform:scaleX(0.9872);">0,67 cm</div>
<svg style="left:0;top:0" width="1341" height="160"><path d="M1132.6,97.9 L1138.6,97.9 L1135.6,94.9 Z" fill="#5a5a5a"/><path d="M1132.6,104.5 L1138.6,104.5 L1135.6,107.5 Z" fill="#5a5a5a"/></svg>
<div class="a" style="left:1071px;top:113px;width:71px;height:23px;background:#ffffff;border:1px solid #c6c6c6;"></div>
<div class="t" style="left:1074.50px;top:120.03px;font-size:11.5px;line-height:11.5px;color:#444444;transform:scaleX(0.9909);">4,6 cm</div>
<svg style="left:0;top:0" width="1341" height="160"><path d="M1130.4,121.0 L1136.4,121.0 L1133.4,118.0 Z" fill="#5a5a5a"/><path d="M1130.4,127.9 L1136.4,127.9 L1133.4,130.9 Z" fill="#5a5a5a"/></svg>
<div class="t" style="left:1019.60px;top:73.03px;font-size:12.2px;line-height:12.2px;color:#262626;transform:scaleX(0.9302);">Colonnes :</div>
<div class="t" style="left:1019.60px;top:95.63px;font-size:12.2px;line-height:12.2px;color:#262626;transform:scaleX(0.9553);">Hauteur :</div>
<div class="t" style="left:1019.60px;top:118.43px;font-size:12.2px;line-height:12.2px;color:#262626;transform:scaleX(0.9143);">Largeur :</div>
<div class="a" style="left:1236px;top:75px;width:71px;height:23px;background:#ffffff;border:1px solid #c6c6c6;"></div>
<div class="t" style="left:1239.50px;top:82.02px;font-size:11.5px;line-height:11.5px;color:#444444;transform:scaleX(0.9775);">7,01 cm</div>
<svg style="left:0;top:0" width="1341" height="160"><path d="M1295.4,82.9 L1301.4,82.9 L1298.4,79.9 Z" fill="#5a5a5a"/><path d="M1295.4,89.8 L1301.4,89.8 L1298.4,92.8 Z" fill="#5a5a5a"/></svg>
<div class="a" style="left:1234px;top:106px;width:71px;height:23px;background:#ffffff;border:1px solid #c6c6c6;"></div>
<div class="t" style="left:1237.50px;top:113.02px;font-size:11.5px;line-height:11.5px;color:#444444;transform:scaleX(0.9726);">5,08 cm</div>
<svg style="left:0;top:0" width="1341" height="160"><path d="M1293.3,114.5 L1299.3,114.5 L1296.3,111.5 Z" fill="#5a5a5a"/><path d="M1293.3,120.7 L1299.3,120.7 L1296.3,123.7 Z" fill="#5a5a5a"/></svg>
<div class="t" style="left:1182.70px;top:81.63px;font-size:12.2px;line-height:12.2px;color:#262626;transform:scaleX(0.9453);">Hauteur :</div>
<div class="t" style="left:1182.70px;top:111.93px;font-size:12.2px;line-height:12.2px;color:#262626;transform:scaleX(0.9184);">Largeur :</div>
<svg style="left:0;top:0" width="1341" height="160"><rect x="1003.5" y="73.5" width="9.5" height="8" fill="#fff" stroke="#6a6a6a" stroke-width="1"/><rect x="1003" y="73" width="10.5" height="2.2" fill="#6a6a6a"/><path d="M1004,77.5 L1013,77.5 M1004,79.5 L1013,79.5 M1006.5,75 L1006.5,81.5 M1009.5,75 L1009.5,81.5" stroke="#8a8a8a" stroke-width="0.8"/><path d="M1000,77.3 L1002.3,75.5 L1002.3,79 Z M1016,77.3 L1013.8,75.5 L1013.8,79 Z" fill="#6a6a6a"/><path d="M1000.0999999999999,97.5 L1003.3,93.3 L1006.5,97.5 Z" fill="#3f77b4"/><rect x="1002.5" y="96.5" width="1.7" height="2.5" fill="#3f77b4"/><path d="M1000.0999999999999,104.5 L1003.3,108.7 L1006.5,104.5 Z" fill="#3f77b4"/><rect x="1002.5" y="103" width="1.7" height="2.5" fill="#3f77b4"/><rect x="1001.8" y="99.5" width="3" height="3" fill="none" stroke="#555" stroke-width="1"/><path d="M1006.3,93.5 L1011.3,93.5 M1006.3,108.5 L1011.3,108.5" stroke="#666" stroke-width="0.9" stroke-dasharray="1,1"/><rect x="1011.8" y="93.5" width="4" height="15" fill="#fff" stroke="#555" stroke-width="1"/><rect x="1000.8" y="116.8" width="15" height="4" fill="#fff" stroke="#555" stroke-width="1"/><path d="M1000.8,121.8 L1000.8,125.8 M1015.8,121.8 L1015.8,125.8" stroke="#666" stroke-width="0.9" stroke-dasharray="1,1"/><path d="M1000.0,129.3 L1004.3,126.1 L1004.3,132.5 Z" fill="#3f77b4"/><rect x="1003.8" y="128.5" width="2.5" height="1.7" fill="#3f77b4"/><path d="M1016.5999999999999,129.3 L1012.3,126.1 L1012.3,132.5 Z" fill="#3f77b4"/><rect x="1010.3" y="128.5" width="2.5" height="1.7" fill="#3f77b4"/><rect x="1006.8" y="127.8" width="3" height="3" fill="none" stroke="#555" stroke-width="1"/><path d="M1162.6,82.5 L1165.8,78.3 L1169.0,82.5 Z" fill="#3f77b4"/><rect x="1165.0" y="81.5" width="1.7" height="2.5" fill="#3f77b4"/><path d="M1162.6,89.5 L1165.8,93.7 L1169.0,89.5 Z" fill="#3f77b4"/><rect x="1165.0" y="88" width="1.7" height="2.5" fill="#3f77b4"/><rect x="1164.3" y="84.5" width="3" height="3" fill="none" stroke="#555" stroke-width="1"/><path d="M1168.8,78.5 L1173.8,78.5 M1168.8,93.5 L1173.8,93.5" stroke="#666" stroke-width="0.9" stroke-dasharray="1,1"/><rect x="1174.3" y="78.5" width="4" height="15" fill="#fff" stroke="#555" stroke-width="1"/><rect x="1163.8" y="109.9" width="15" height="4" fill="#fff" stroke="#555" stroke-width="1"/><path d="M1163.8,114.9 L1163.8,118.9 M1178.8,114.9 L1178.8,118.9" stroke="#666" stroke-width="0.9" stroke-dasharray="1,1"/><path d="M1163.0,122.4 L1167.3,119.2 L1167.3,125.60000000000001 Z" fill="#3f77b4"/><rect x="1166.8" y="121.60000000000001" width="2.5" height="1.7" fill="#3f77b4"/><path d="M1179.6,122.4 L1175.3,119.2 L1175.3,125.60000000000001 Z" fill="#3f77b4"/><rect x="1173.3" y="121.60000000000001" width="2.5" height="1.7" fill="#3f77b4"/><rect x="1169.8" y="120.9" width="3" height="3" fill="none" stroke="#555" stroke-width="1"/><path d="M1303.5,152 L1303.5,146.5 L1309.5,146.5 M1305.5,148.5 L1309.5,152.5 M1309.5,149.5 L1309.5,152.5 L1306.5,152.5" fill="none" stroke="#777" stroke-width="1"/></svg>
<svg style="left:0;top:0" width="1341" height="160"><rect x="12.5" y="116.5" width="13" height="14.5" fill="#fff" stroke="#6b6b6b" stroke-width="1"/><rect x="12" y="116" width="14" height="2.2" fill="#4a78b4"/><circle cx="16" cy="122" r="1.1" fill="#6b6b6b"/><rect x="18.5" y="121.5" width="5" height="1" fill="#6b6b6b"/><circle cx="16" cy="126.5" r="1.1" fill="none" stroke="#6b6b6b" stroke-width="0.8"/><rect x="18.5" y="126" width="5" height="1" fill="#6b6b6b"/><rect x="199.5" y="72.5" width="16" height="16" fill="#fff" stroke="#6d6d6d" stroke-width="1.2"/><rect x="199" y="72" width="17" height="2.5" fill="#6d6d6d"/><rect x="201.5" y="76.5" width="12" height="1.4" fill="#3e6aa8"/><rect x="201.5" y="80.3" width="3" height="1.4" fill="#3e6aa8"/><path d="M206.5,79 L213,79 L210.5,82 L210.5,85.5 L209,85.5 L209,82 Z" fill="#5a5a5a"/><rect x="201.5" y="84" width="4" height="1.2" fill="#9fb7d6"/><rect x="212.5" y="83.5" width="16" height="16" fill="#fff" stroke="#6d6d6d" stroke-width="1.2"/><rect x="214" y="85" width="3" height="13" fill="#b8b8b8"/><rect x="218" y="85" width="9" height="2.5" fill="#b8b8b8"/><path d="M219.5,95 L223.5,95 L223.5,89.5 M221.5,91.5 L223.5,89.3 L225.5,91.5 M221,93.5 L219.2,95 L221,96.5" fill="none" stroke="#3e6aa8" stroke-width="1.1"/><path d="M200,90.5 Q201.5,96 208,96" fill="none" stroke="#4f9a7b" stroke-width="4.2"/><path d="M205.5,90.2 L214.5,96 L205.5,101.5 Z" fill="#4f9a7b"/></svg>
<svg style="left:0;top:0" width="500" height="34"><path d="M22,9.8 L36,9.8 L36,23.9 L22,23.9 Z M24.4,11.3 L24.4,16.5 L33.8,16.5 L33.8,11.3 Z M25,19.2 L25,23 L33,23 L33,19.2 Z" fill="#edf7ef" fill-rule="evenodd"/><rect x="27" y="20" width="3" height="2.5" fill="#edf7ef"/><rect x="49.9" y="14" width="16" height="8" rx="1.5" fill="#edf7ef"/><rect x="53.5" y="19.5" width="8" height="5.5" fill="#217346" stroke="#edf7ef" stroke-width="1.2"/><rect x="52.5" y="10" width="3" height="4" fill="none" stroke="#edf7ef" stroke-width="1.1"/><circle cx="61.8" cy="13.2" r="4.6" fill="#edf7ef" stroke="#217346" stroke-width="0.8"/><path d="M59.6,13.2 L61.2,14.8 L64,11.8" fill="none" stroke="#217346" stroke-width="1.3"/><path d="M81.5,9.3 L89.5,9.3 L92.6,12.5 L92.6,24.6 L81.5,24.6 Z" fill="none" stroke="#edf7ef" stroke-width="1.2"/><circle cx="87.5" cy="18.3" r="3.6" fill="none" stroke="#edf7ef" stroke-width="1.5"/><path d="M90,21 L94,24.5" stroke="#edf7ef" stroke-width="1.8"/><rect x="105" y="14.7" width="4" height="9.2" fill="#edf7ef"/><rect x="110" y="9.8" width="4" height="14.1" fill="#edf7ef"/><rect x="115" y="13" width="4" height="10.9" fill="#edf7ef"/><path d="M126,15.4 L131.2,15.4 L128.6,18.2 Z" fill="#edf7ef"/><text x="143.3" y="13.6" font-family="Liberation Sans" font-weight="700" font-size="6" fill="#edf7ef" textLength="12.8" lengthAdjust="spacingAndGlyphs">ABC</text><path d="M144.4,19.8 L148.4,23.8 L156.5,15.4" fill="none" stroke="#edf7ef" stroke-width="2.4"/><path d="M173.5,14.5 L180.5,14.5 Q185.3,14.5 185.3,18.3 Q185.3,22 180.5,22.3" fill="none" stroke="#5a9d76" stroke-width="1.5"/><path d="M176.5,10.8 L172.5,14.5 L176.5,18.2" fill="none" stroke="#5a9d76" stroke-width="1.5"/><path d="M191.5,15.2 L196.5,15.2 L194,17.6 Z" fill="#5a9d76"/><path d="M220,14.5 L213,14.5 Q208.2,14.5 208.2,18.3 Q208.2,22 213,22.3" fill="none" stroke="#5a9d76" stroke-width="1.5"/><path d="M217,10.8 L221,14.5 L217,18.2" fill="none" stroke="#5a9d76" stroke-width="1.5"/><path d="M225.5,15.2 L230.5,15.2 L228,17.6 Z" fill="#5a9d76"/><path d="M242,13.8 L247.5,13.8 M249,10.5 L256,10.5 M249,13.5 L256,13.5 M249,16.5 L256,16.5 M249,19.5 L256,19.5 M249,22.5 L256,22.5" stroke="#5a9d76" stroke-width="1.2"/><path d="M270.5,13.8 L276,13.8 M273.2,11 L273.2,16.6 M278,10.5 L285,10.5 M278,13.5 L285,13.5 M278,16.5 L285,16.5 M278,19.5 L285,19.5 M278,22.5 L285,22.5" stroke="#5a9d76" stroke-width="1.2"/><text x="300.3" y="15" font-family="Liberation Sans" font-weight="700" font-size="8.6" fill="#edf7ef">A</text><text x="300.6" y="23.4" font-family="Liberation Sans" font-weight="700" font-size="8.6" fill="#edf7ef">Z</text><path d="M311.5,9.5 L311.5,23.5 M308.8,20.5 L311.5,23.8 L314.2,20.5" fill="none" stroke="#edf7ef" stroke-width="1.1"/><path d="M324.5,23 L330,9.5 L335.5,23 L341,9.5 M324.5,13 L330,24 L335.5,13 L339,20" fill="none" stroke="#edf7ef" stroke-width="1.1"/><path d="M346.2,15.4 L351.5,15.4 L348.8,18 Z" fill="#edf7ef"/><rect x="367.5" y="9.3" width="5" height="4" fill="none" stroke="#edf7ef" stroke-width="1.2"/><rect x="362.5" y="19.3" width="5" height="4" fill="none" stroke="#edf7ef" stroke-width="1.2"/><rect x="372.5" y="19.3" width="5" height="4" fill="none" stroke="#edf7ef" stroke-width="1.2"/><path d="M365,19.3 L365,16.8 L375,16.8 L375,19.3 M370,13.3 L370,16.8" fill="none" stroke="#edf7ef" stroke-width="1.2"/><path d="M370,13.3 L373,16.3 L370,19.3 L367,16.3 Z" fill="#edf7ef" opacity="0.7"/><rect x="391" y="9.5" width="16" height="14.5" fill="none" stroke="#edf7ef" stroke-width="1.3"/><rect x="391" y="9.5" width="16" height="2" fill="#edf7ef"/><path d="M393,14.5 L396,14.5 M393,18.5 L396,18.5" stroke="#edf7ef" stroke-width="1.1"/><rect x="398.5" y="13.3" width="6" height="2.5" fill="none" stroke="#edf7ef" stroke-width="1"/><rect x="398.5" y="17.3" width="6" height="2.5" fill="none" stroke="#edf7ef" stroke-width="1"/><path d="M436,11 L436,24 L421,24 L421,17" fill="none" stroke="#edf7ef" stroke-width="1.2"/><path d="M423,18 L434,18 M423,20.8 L434,20.8" stroke="#edf7ef" stroke-width="1.1"/><circle cx="423.5" cy="14.2" r="3.6" fill="#edf7ef"/><circle cx="431.3" cy="13" r="3.3" fill="#edf7ef"/><path d="M422,13.5 L424.5,12 M430,12.5 L432.5,11.2" stroke="#217346" stroke-width="1"/><rect x="454.5" y="9.3" width="5" height="4" fill="none" stroke="#edf7ef" stroke-width="1.2"/><rect x="449.5" y="19.3" width="5" height="4" fill="none" stroke="#edf7ef" stroke-width="1.2"/><rect x="459.5" y="19.3" width="5" height="4" fill="none" stroke="#edf7ef" stroke-width="1.2"/><path d="M452,19.3 L452,16.8 L462,16.8 L462,19.3 M457,13.3 L457,16.8" fill="none" stroke="#edf7ef" stroke-width="1.2"/><path d="M457,13.3 L460,16.3 L457,19.3 L454,16.3 Z" fill="#edf7ef" opacity="0.7"/><path d="M482,12.8 L490,12.8" stroke="#edf7ef" stroke-width="1"/><path d="M482.5,15.5 L486,19 L489.5,15.5" fill="none" stroke="#edf7ef" stroke-width="1.1"/></svg>
<svg style="left:955px;top:40px" width="16" height="18"><path d="M4.5,11.5 Q1.5,9 1.5,6.5 Q1.5,1.5 7.5,1.5 Q13.5,1.5 13.5,6.5 Q13.5,9 10.5,11.5 L10.5,13 L4.5,13 Z" fill="none" stroke="#ffffff" stroke-width="1.2"/><path d="M5,15 L10,15 M5.5,16.8 L9.5,16.8" stroke="#ffffff" stroke-width="1.1"/></svg>
<svg style="left:0;top:160px" width="340" height="40"><path d="M166.8,17.3 L173.8,17.3 L170.3,20.8 Z" fill="#5a5a5a"/><rect x="195.5" y="15" width="1.5" height="1.5" fill="#9a9a9a"/><rect x="195.5" y="19" width="1.5" height="1.5" fill="#9a9a9a"/><rect x="195.5" y="23" width="1.5" height="1.5" fill="#9a9a9a"/><path d="M225,15 L235,25 M235,15 L225,25" stroke="#b8b8b8" stroke-width="1.9"/><path d="M260,20.5 L264.2,24.5 L272.5,15.5" fill="none" stroke="#b8b8b8" stroke-width="2.2"/></svg>
<div class="t" style="left:296.50px;top:174.45px;font-size:13px;line-height:13px;color:#555555;font-weight:700;transform:scaleX(1.2662);font-family:'Liberation Serif';font-style:italic;">f</div>
<div class="t" style="left:301.50px;top:178.50px;font-size:10px;line-height:10px;color:#555555;font-weight:700;transform:scaleX(1.0787);font-family:'Liberation Serif';font-style:italic;">x</div>
<svg style="left:0;top:280px" width="25" height="22"><path d="M22,8 L22,19 L11,19 Z" fill="#a9a9a9"/></svg>
<svg style="left:436px;top:629px" width="14" height="6"><path d="M2.5,5.5 L2.5,1.5 L8.5,1.5 L11,4 L11,5.5" fill="#fff" stroke="#000" stroke-width="1.3"/></svg>
</body></html>
